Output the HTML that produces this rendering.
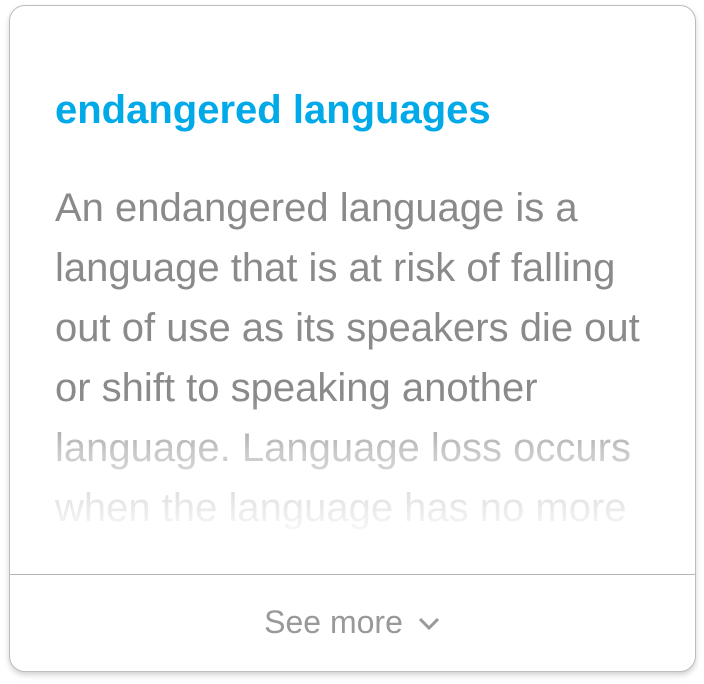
<!DOCTYPE html>
<html><head><style>
body{margin:0;background:#fff;width:704px;height:684px;overflow:hidden;font-family:"Liberation Sans",Arial,sans-serif}
.card{position:absolute;left:9px;top:5px;width:685px;height:665px;border:1px solid #bdbdbd;border-radius:16px;background:#fff;box-shadow:0 3px 6px rgba(0,0,0,.18);overflow:hidden}
h1{position:absolute;left:45px;top:84px;margin:0;font-size:40px;font-weight:bold;color:#00a9e8;line-height:40px;white-space:nowrap}
.body{position:absolute;left:45px;top:172px;width:630px;height:365px;overflow:hidden;font-size:40px;line-height:60px;color:#8a8a8a;white-space:nowrap;
-webkit-mask-image:linear-gradient(to bottom,#000 0,#000 220px,rgba(0,0,0,.45) 275px,rgba(0,0,0,.08) 350px,rgba(0,0,0,0) 365px);
mask-image:linear-gradient(to bottom,#000 0,#000 220px,rgba(0,0,0,.45) 275px,rgba(0,0,0,.08) 350px,rgba(0,0,0,0) 365px)}
.div{position:absolute;left:0;right:0;top:568px;border-top:1px solid #b5b5b5}
.more{position:absolute;left:0;right:0;top:598px;text-align:center;font-size:32px;line-height:36px;color:#999}
.more svg{vertical-align:middle;margin-left:14px;margin-top:-4px}
</style></head><body>
<div class="card">
<h1>endangered languages</h1>
<div class="body">An endangered language is a<br>language that is at risk of falling<br>out of use as its speakers die out<br>or shift to speaking another<br>language. Language loss occurs<br>when the language has no more</div>
<div class="div"></div>
<div class="more">See more<svg width="24" height="16" viewBox="0 0 24 16"><path d="M3 4 L12 13 L21 4" fill="none" stroke="#999" stroke-width="3"/></svg></div>
</div>
</body></html>
